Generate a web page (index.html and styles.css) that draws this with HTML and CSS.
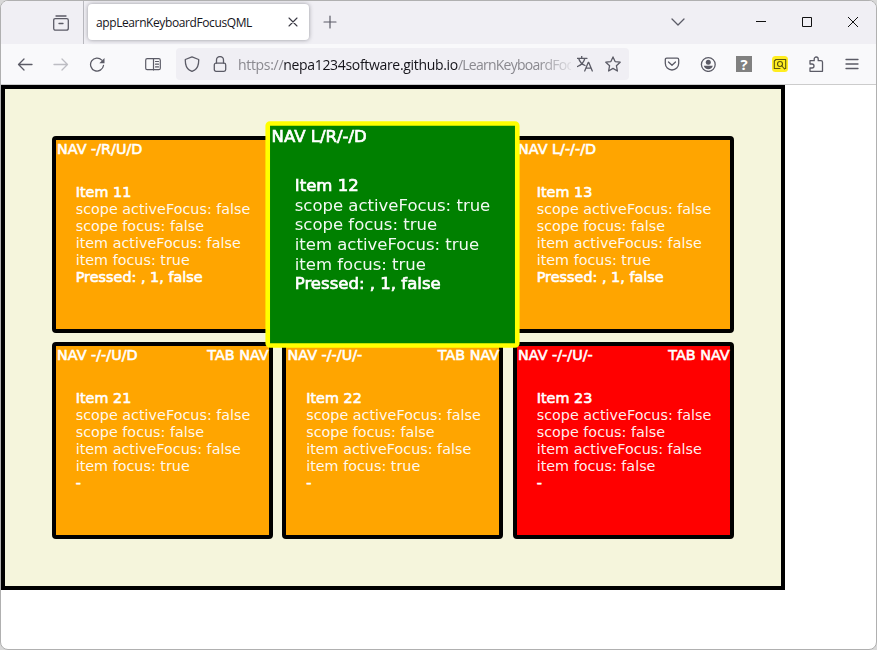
FILE: index.html
```html
<!DOCTYPE html>
<html lang="en">
<head>
<meta charset="utf-8">
<title>appLearnKeyboardFocusQML</title>
<link rel="stylesheet" href="styles.css">
</head>
<body>
<div class="window">
  <header class="tabstrip">
    <div class="firefox-view"><svg class="icon" viewBox="0 0 16 16"><path d="M3 1h10M2.200 3.700h11.600q1.500 0 1.500 1.500v8q0 2-2 2H2.700q-2 0-2-2v-8q0-1.500 1.500-1.500zM6 8.500h4"/></svg></div>
    <div class="tab"><span class="tab-title">appLearnKeyboardFocusQML</span><svg class="icon close" viewBox="0 0 16 16"><path d="M4 4l8 8M12 4l-8 8"/></svg></div>
    <svg class="icon plus" viewBox="0 0 16 16"><path d="M8 2v12M2 8h12"/></svg>
    <svg class="icon chevron" viewBox="0 0 16 16"><path d="M2 5l6 6 6-6"/></svg>
    <div class="controls">
      <svg class="icon" viewBox="0 0 16 16"><path d="M3 7.500h10"/></svg>
      <svg class="icon" viewBox="0 0 16 16"><path d="M3.500 3.500h9v9h-9z"/></svg>
      <svg class="icon" viewBox="0 0 16 16"><path d="M3 3l10 10M13 3L3 13"/></svg>
    </div>
  </header>
  <nav class="toolbar">
    <div class="buttons">
      <svg class="icon" viewBox="0 0 16 16"><path d="M15 8.500H1.500M7 3L1.500 8.500 7 14"/></svg>
      <svg class="icon disabled" viewBox="0 0 16 16"><path d="M1 8.500h13.500M9 3l5.500 5.500L9 14"/></svg>
      <svg class="icon" viewBox="0 0 16 16"><path d="M14.500 9.500a6.500 6.500 0 1 1-1.700-5.400"/><path class="solid" d="M15.500 2v5.200h-5.200z"/></svg>
    </div>
    <svg class="icon sidebar" viewBox="0 0 16 16"><rect x=".7" y="2.700" width="14.600" height="11" rx="1.500"/><path d="M8.500 3v11M10.500 5.500h3M10.500 8.200h3M10.500 10.900h3"/></svg>
    <div class="urlbar">
      <svg class="icon" viewBox="0 0 16 16"><path d="M8 .9l6.700 2.600q.2 7.800-4.200 10.700L8 15.300l-2.500-1.100Q1.100 11.300 1.300 3.500z"/></svg>
      <svg class="icon" viewBox="0 0 16 16"><rect x="2.300" y="7.200" width="11.400" height="8.100" rx="1.700"/><path d="M4.500 7V4a3.500 3.500 0 0 1 7 0v3"/></svg>
      <span class="url">https://<b>nepa1234software.github.io</b><span class="path">/LearnKeyboardFoc</span></span>
      <svg class="icon translate" viewBox="0 0 16 16"><path d="M0 2.300h10M4.700 0v2.300M1.700 2.500q1.500 5 6.300 7M7.800 2.500Q6.500 8 .5 10.500M7.700 15l3.500-8.500h.6l3.500 8.500M9 12.200h5"/></svg>
      <svg class="icon" viewBox="0 0 16 16"><path d="M8 .9l2.100 4.700 5.100.6-3.800 3.500 1 5.300L8 12.400 3.600 15l1-5.300L.8 6.200l5.100-.6z"/></svg>
    </div>
    <div class="buttons extensions">
      <svg class="icon" viewBox="0 0 16 16"><path d="M2.800 2.200h10.400q1.500 0 1.500 1.500v3.600a6.700 6.700 0 0 1-13.400 0V3.700q0-1.500 1.500-1.500zM4.500 6L8 9.300 11.500 6"/></svg>
      <svg class="icon" viewBox="0 0 16 16"><circle cx="8.300" cy="8.500" r="6.900"/><circle class="solid" cx="8.300" cy="6.200" r="2.500"/><path class="solid" d="M3.800 9.800h9q-1 3.400-4.500 3.400t-4.500-3.400z"/></svg>
      <span class="question">?</span>
      <svg class="icon capture" viewBox="0 0 16 16"><rect class="glow" x="0" y="0" width="16" height="16" rx="3.500"/><path d="M8 12.500H2.300V5L4 3.500h9.700v9h-1"/><circle cx="8" cy="8" r="2.500"/><path d="M9.500 9.500l3 3.500"/></svg>
      <svg class="icon" viewBox="0 0 16 16"><path d="M2 15.300V12h2a2 2 0 0 0 0-4H2V4.700h4.200V3a2 2 0 0 1 4 0v1.700h2.800q1.500 0 1.500 1.500v9.100z"/></svg>
      <svg class="icon" viewBox="0 0 16 16"><path d="M2 3.500h12M2 8h12M2 12.500h12"/></svg>
    </div>
  </nav>
  <main class="canvas">
    <section class="card">
      <div class="nav"><span>NAV -/R/U/D</span></div>
      <div class="info"><strong>Item 11</strong><p>scope activeFocus: false</p><p>scope focus: false</p><p>item activeFocus: false</p><p>item focus: true</p><strong>Pressed: , 1, false</strong></div>
    </section>
    <section class="card active">
      <div class="nav"><span>NAV L/R/-/D</span></div>
      <div class="info"><strong>Item 12</strong><p>scope activeFocus: true</p><p>scope focus: true</p><p>item activeFocus: true</p><p>item focus: true</p><strong>Pressed: , 1, false</strong></div>
    </section>
    <section class="card">
      <div class="nav"><span>NAV L/-/-/D</span></div>
      <div class="info"><strong>Item 13</strong><p>scope activeFocus: false</p><p>scope focus: false</p><p>item activeFocus: false</p><p>item focus: true</p><strong>Pressed: , 1, false</strong></div>
    </section>
    <section class="card">
      <div class="nav"><span>NAV -/-/U/D</span><span>TAB NAV</span></div>
      <div class="info"><strong>Item 21</strong><p>scope activeFocus: false</p><p>scope focus: false</p><p>item activeFocus: false</p><p>item focus: true</p><strong>-</strong></div>
    </section>
    <section class="card">
      <div class="nav"><span>NAV -/-/U/-</span><span>TAB NAV</span></div>
      <div class="info"><strong>Item 22</strong><p>scope activeFocus: false</p><p>scope focus: false</p><p>item activeFocus: false</p><p>item focus: true</p><strong>-</strong></div>
    </section>
    <section class="card unfocused">
      <div class="nav"><span>NAV -/-/U/-</span><span>TAB NAV</span></div>
      <div class="info"><strong>Item 23</strong><p>scope activeFocus: false</p><p>scope focus: false</p><p>item activeFocus: false</p><p>item focus: false</p><strong>-</strong></div>
    </section>
  </main>
</div>
</body>
</html>
```
FILE: styles.css
```css
* { box-sizing: border-box; }
body { margin: 0; background: #d8d8d8; overflow: hidden; }
p { margin: 0; }

.window {
  width: 877px;
  height: 650px;
  border: 1px solid #b0b0b0;
  border-radius: 8px;
  overflow: hidden;
  background: #fff;
  font-family: "Open Sans", "Noto Sans", sans-serif;
}

.icon {
  width: 16px;
  height: 16px;
  flex: none;
  fill: none;
  stroke: #5b5b66;
  stroke-width: 1.3;
  stroke-linecap: round;
  stroke-linejoin: round;
}
.icon .solid { fill: #5b5b66; stroke: none; }
.disabled { stroke: #bdbdc3; }

.tabstrip { display: flex; align-items: center; height: 43px; padding-bottom: 1px; background: #f0eff4; }
.firefox-view {
  display: flex;
  align-items: center;
  align-self: stretch;
  width: 83px;
  height: 43px;
  padding-left: 52px;
  border-right: 1px solid #b9b9bf;
}
.tab {
  display: flex;
  align-items: center;
  justify-content: space-between;
  width: 221px;
  height: 36px;
  margin-left: 4px;
  padding: 0 8px;
  border-radius: 4px;
  background: #fff;
  box-shadow: 0 0 4px rgba(90, 90, 100, .6);
}
.tab-title { font-size: 12px; letter-spacing: -.4px; color: #15141a; white-space: nowrap; }
.close { stroke: #3a3944; stroke-width: 1.1; }
.plus { margin-left: 13px; stroke-width: 1.2; }
.chevron { margin-left: auto; }
.controls { display: flex; gap: 30px; margin: 0 15px 0 67px; }
.controls .icon { stroke: #111; stroke-width: 1; stroke-linecap: butt; stroke-linejoin: miter; }

.toolbar { display: flex; align-items: center; height: 41px; background: #f9f9fb; border-bottom: 1px solid #ccc; }
.buttons { display: flex; align-items: center; gap: 20px; margin-left: 16px; }
.sidebar { margin-left: 40px; stroke-width: 1.2; }
.urlbar {
  display: flex;
  align-items: center;
  gap: 12px;
  width: 453px;
  height: 32px;
  margin-left: 15px;
  padding: 0 8px;
  border-radius: 4px;
  background: #f0eff4;
}
.url {
  flex: 1;
  min-width: 0;
  margin-left: -2px;
  margin-right: -6px;
  font-size: 14px;
  letter-spacing: -.32px;
  color: #8a898f;
  white-space: nowrap;
  mask-image: linear-gradient(to right, #000 90%, rgba(0, 0, 0, .15));
}
.url b { font-weight: 400; color: #15141a; }
.path { letter-spacing: -.75px; }
.extensions { margin-left: 35px; }
.question {
  width: 16px;
  height: 16px;
  background: #808080;
  color: #fff;
  font: 700 15px/16px "Open Sans", sans-serif;
  text-align: center;
}
.capture { stroke: #5c5510; stroke-width: 1.1; }
.capture .glow { fill: #ffed20; stroke: none; }

.canvas {
  display: grid;
  grid-template-columns: repeat(3, 221px);
  grid-template-rows: repeat(2, 197px);
  gap: 9.500px;
  width: 784px;
  height: 505px;
  padding: 46.600px 0 0 46.700px;
  border: 4px solid #000;
  background: #f5f5dc;
  font-family: "DejaVu Sans", sans-serif;
  font-size: 14.350px;
  line-height: 17px;
  color: #fff;
}
.card { border: 4px solid #000; border-radius: 4px; background: #ffa500; white-space: nowrap; }
.nav, .card strong { font-weight: 400; letter-spacing: .02px; -webkit-text-stroke: .6px #fff; }
.nav { display: flex; justify-content: space-between; padding: 1px 0 0 1.300px; }
.info { padding: 26px 0 0 20px; }
.info p { color: rgba(255, 255, 255, .95); }
.card strong { display: block; }
.active { z-index: 1; transform: scale(1.15); border-color: #ff0; background: #008000; }
.active .info { padding-left: 21.500px; }
.unfocused { background: #f00; }
```
